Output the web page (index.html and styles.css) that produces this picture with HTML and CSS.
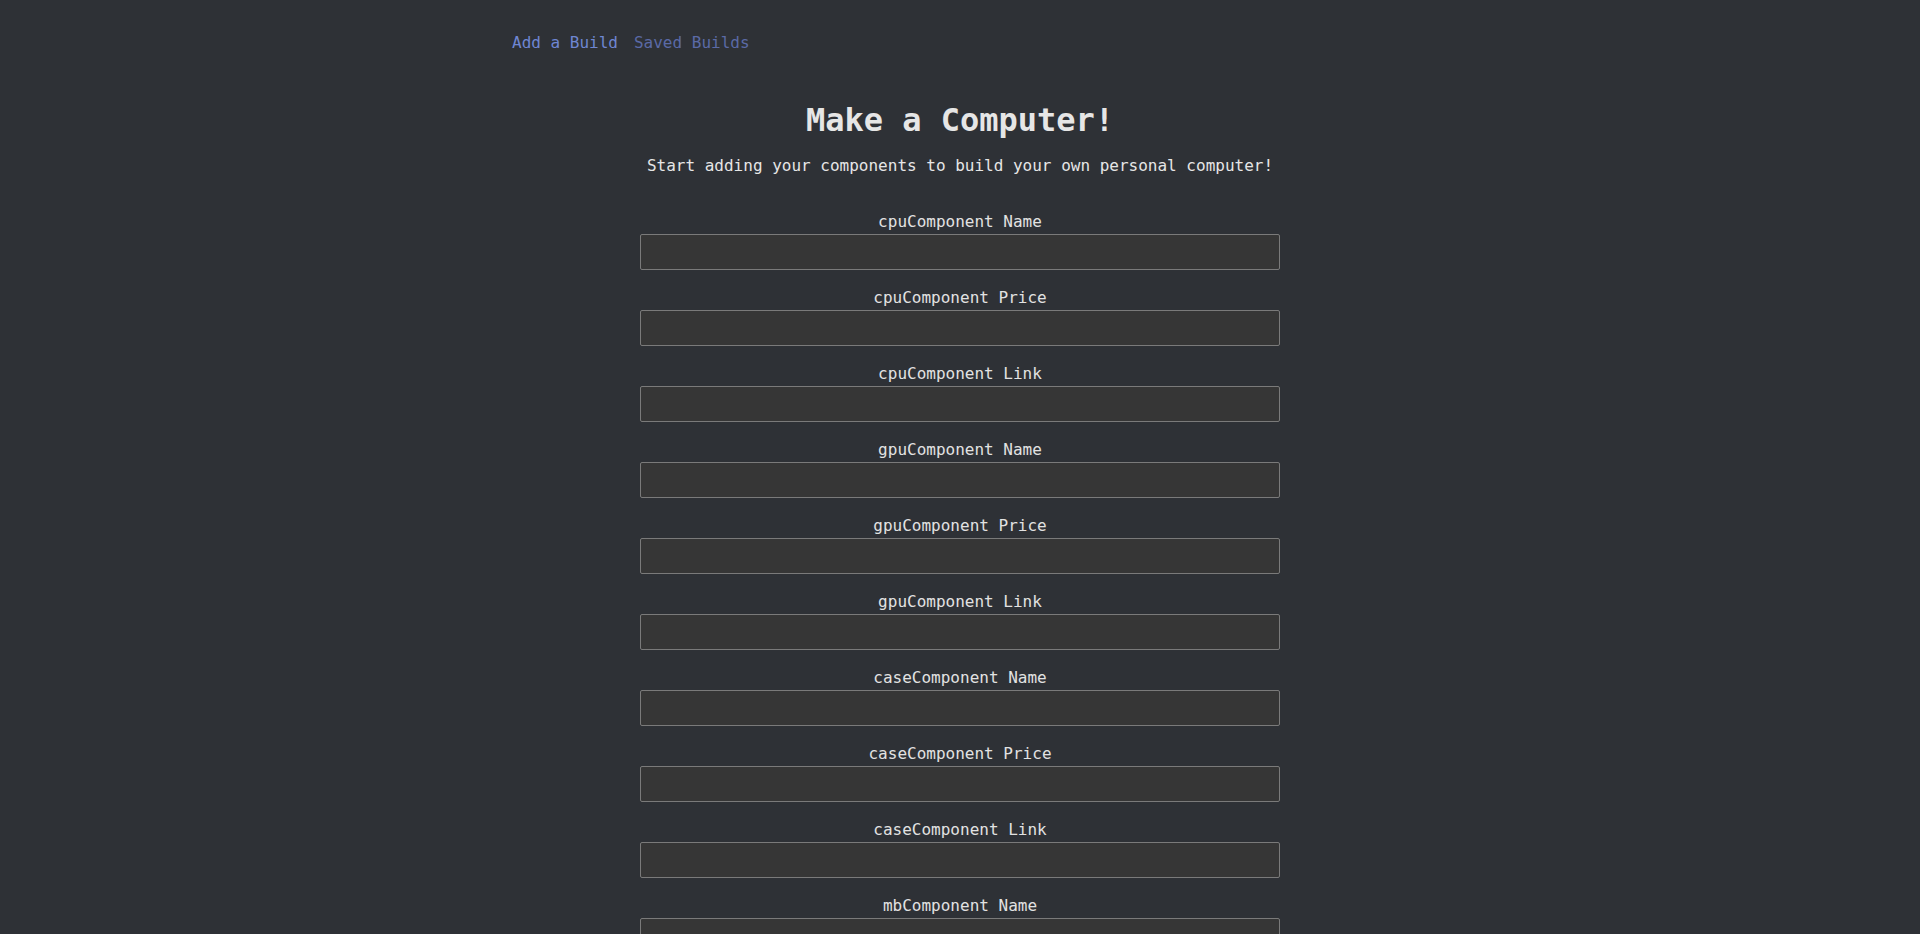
FILE: index.html
```html
<!DOCTYPE html>
<html lang="en">
<head>
<meta charset="utf-8">
<title>Make a Computer!</title>
<link rel="stylesheet" href="styles.css">
</head>
<body>
<div class="container">
  <nav class="nav">
    <a class="nav-link active" href="#">Add a Build</a>
    <a class="nav-link" href="#">Saved Builds</a>
  </nav>
  <main class="main">
    <h1 class="title">Make a Computer!</h1>
    <p class="subtitle">Start adding your components to build your own personal computer!</p>
    <form class="form">
      <div class="field"><label class="label">cpuComponent Name</label><input class="input" type="text"></div>
      <div class="field"><label class="label">cpuComponent Price</label><input class="input" type="text"></div>
      <div class="field"><label class="label">cpuComponent Link</label><input class="input" type="text"></div>
      <div class="field"><label class="label">gpuComponent Name</label><input class="input" type="text"></div>
      <div class="field"><label class="label">gpuComponent Price</label><input class="input" type="text"></div>
      <div class="field"><label class="label">gpuComponent Link</label><input class="input" type="text"></div>
      <div class="field"><label class="label">caseComponent Name</label><input class="input" type="text"></div>
      <div class="field"><label class="label">caseComponent Price</label><input class="input" type="text"></div>
      <div class="field"><label class="label">caseComponent Link</label><input class="input" type="text"></div>
      <div class="field"><label class="label">mbComponent Name</label><input class="input" type="text"></div>
      <div class="field"><label class="label">mbComponent Price</label><input class="input" type="text"></div>
      <div class="field"><label class="label">mbComponent Link</label><input class="input" type="text"></div>
    </form>
  </main>
</div>
</body>
</html>
```
FILE: styles.css
```css
html, body {
  margin: 0;
  padding: 0;
  background: #2e3136;
}
body {
  font-family: "DejaVu Sans Mono", "Liberation Mono", monospace;
  font-size: 16px;
  color: #e2e2e2;
}
.container {
  width: 896px;
  margin: 0 auto;
}
.nav {
  display: flex;
  gap: 16px;
  padding-top: 33px;
  line-height: 19px;
}
.nav-link {
  text-decoration: none;
  color: #5b6aa6;
}
.nav-link.active {
  color: #6f86d2;
}
.main {
  display: flex;
  flex-direction: column;
  align-items: center;
}
.title {
  margin: 50px 0 0;
  font-size: 32px;
  line-height: 37px;
  font-weight: bold;
  color: #e6e6e6;
}
.subtitle {
  margin: 17px 0 0;
  line-height: 19px;
  color: #e6e6e6;
}
.form {
  margin-top: 37px;
  display: flex;
  flex-direction: column;
  align-items: center;
  gap: 18px;
}
.field {
  display: flex;
  flex-direction: column;
  align-items: center;
  gap: 3px;
}
.label {
  line-height: 19px;
  color: #e2e2e2;
}
.input {
  box-sizing: border-box;
  width: 640px;
  height: 36px;
  margin: 0;
  background: #363636;
  border: 1px solid #7a7a7a;
  border-radius: 2px;
  color: #e2e2e2;
  font-family: inherit;
  font-size: 16px;
  padding: 0 8px;
}
```
